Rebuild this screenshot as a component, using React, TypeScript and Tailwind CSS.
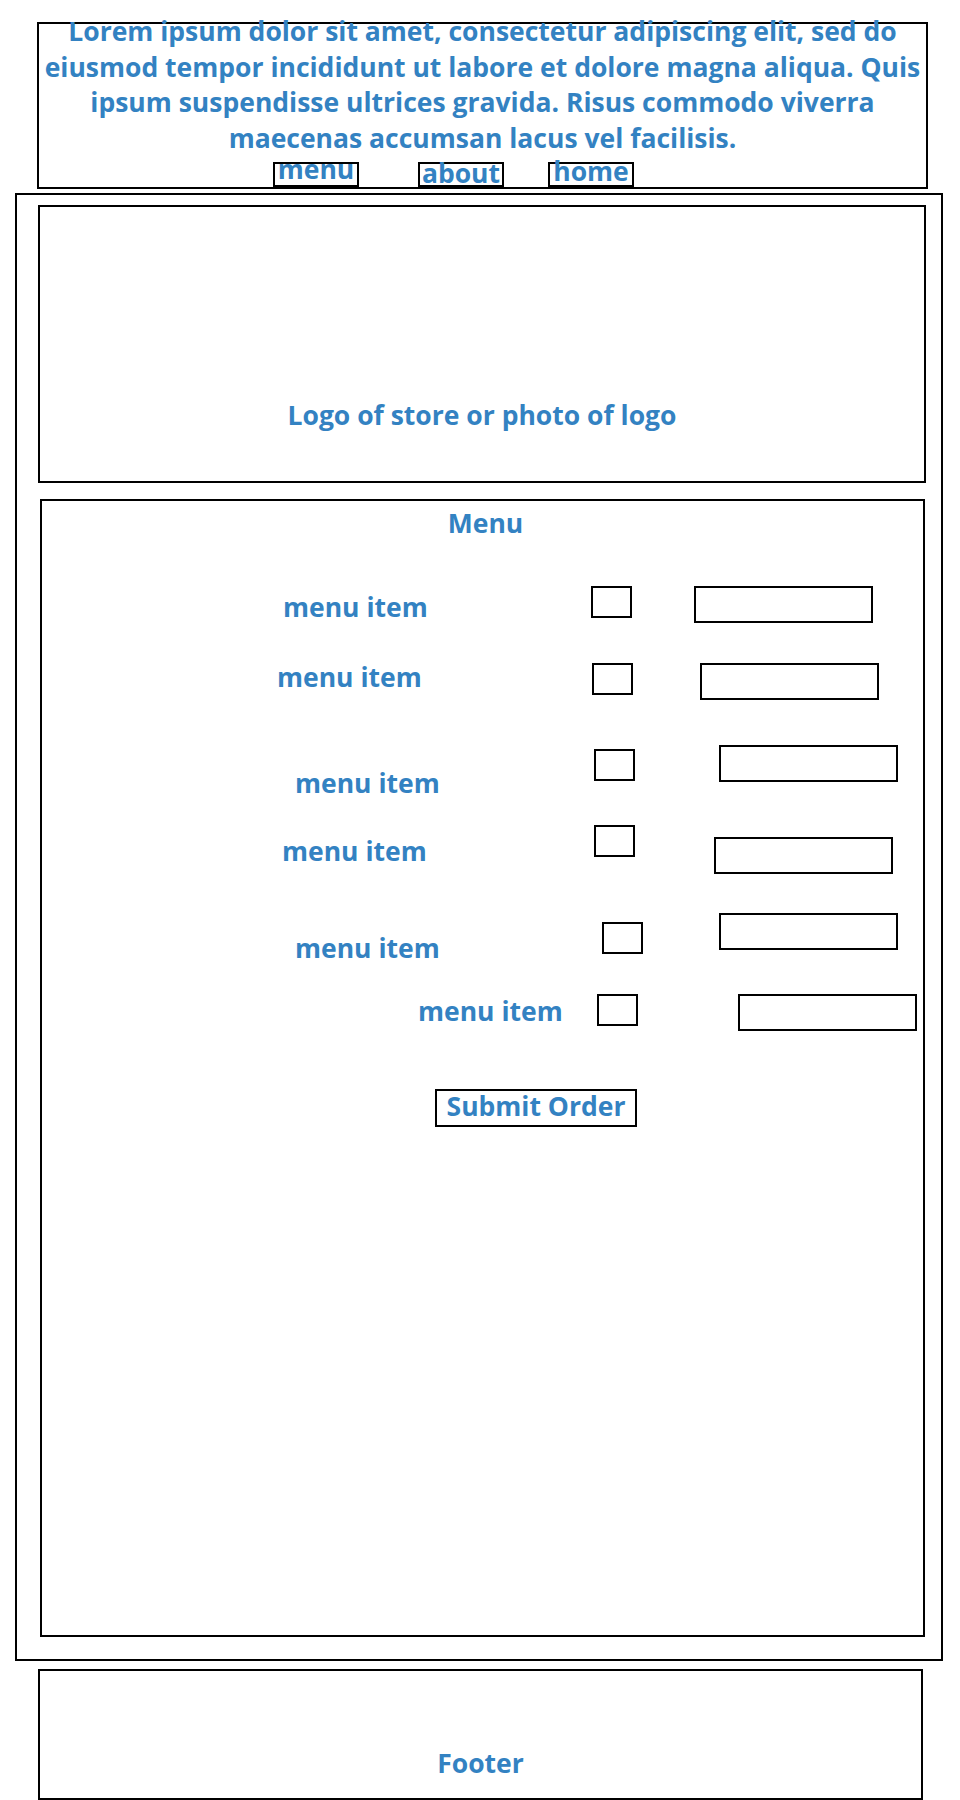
import React from "react";

const rows = [
  { mt: "mt-[45px]", textMl: "ml-[241px]", textMt: "mt-[3px]", textW: "w-[200px]", cbMl: "ml-[108px]", cbMt: "mt-0", tbMl: "ml-[62px]", tbMt: "mt-0" },
  { mt: "mt-[34px]", textMl: "ml-[235px]", textMt: "mt-0", textW: "w-[200px]", cbMl: "ml-[115px]", cbMt: "mt-[4px]", tbMl: "ml-[67px]", tbMt: "mt-[4px]" },
  { mt: "mt-[45px]", textMl: "ml-[253px]", textMt: "mt-[20px]", textW: "w-[200px]", cbMl: "ml-[99px]", cbMt: "mt-[4px]", tbMl: "ml-[84px]", tbMt: "mt-0" },
  { mt: "mt-[24px]", textMl: "ml-[240px]", textMt: "mt-[8px]", textW: "w-[200px]", cbMl: "ml-[112px]", cbMt: "mt-0", tbMl: "ml-[79px]", tbMt: "mt-[12px]" },
  { mt: "mt-[39px]", textMl: "ml-[253px]", textMt: "mt-[17px]", textW: "w-[200px]", cbMl: "ml-[107px]", cbMt: "mt-[9px]", tbMl: "ml-[76px]", tbMt: "mt-0" },
  { mt: "mt-[27px]", textMl: "ml-[376px]", textMt: "mt-0", textW: "w-[160px]", cbMl: "ml-[19px]", cbMt: "mt-[1px]", tbMl: "ml-[100px]", tbMt: "mt-[1px]" },
];

export default function App() {
  return (
    <div
      className="w-[960px] h-[1800px] bg-white overflow-hidden flex flex-col font-bold text-[#3382c2] text-[26.5px] leading-[36px]"
      style={{ fontFamily: '"Open Sans", "Noto Sans", sans-serif' }}
    >
      {/* Header */}
      <div className="ml-[37px] mt-[22px] w-[891px] h-[167px] shrink-0 border-2 border-black flex flex-col items-center">
        <p className="-mt-[10px] text-center leading-[35.5px] whitespace-nowrap">
          Lorem ipsum dolor sit amet, consectetur adipiscing elit, sed do
          <br />
          eiusmod tempor incididunt ut labore et dolore magna aliqua. Quis
          <br />
          ipsum suspendisse ultrices gravida. Risus commodo viverra
          <br />
          maecenas accumsan lacus vel facilisis.
        </p>
        <nav className="self-stretch mt-[6px] h-[25px] flex">
          <div className="ml-[234px] w-[86px] h-[25px] border-2 border-black flex justify-center">
            <span className="-mt-[5px] leading-[21px]">menu</span>
          </div>
          <div className="ml-[59px] w-[86px] h-[25px] border-2 border-black flex justify-center">
            <span className="-mt-[1px] leading-[21px]">about</span>
          </div>
          <div className="ml-[44px] w-[86px] h-[25px] border-2 border-black flex justify-center">
            <span className="-mt-[3px] leading-[21px]">home</span>
          </div>
        </nav>
      </div>

      {/* Main */}
      <div className="ml-[15px] mt-[4px] w-[928px] h-[1468px] shrink-0 border-2 border-black flex flex-col">
        <div className="ml-[21px] mt-[10px] w-[888px] h-[278px] shrink-0 border-2 border-black flex flex-col justify-end items-center pb-[48px]">
          <span className="whitespace-nowrap">Logo of store or photo of logo</span>
        </div>

        <div className="ml-[23px] mt-[16px] w-[885px] h-[1138px] shrink-0 border-2 border-black flex flex-col">
          <div className="mt-[4px] pl-[6px] text-center">Menu</div>

          {rows.map((r, i) => (
            <div key={i} className={`flex items-start ${r.mt}`}>
              <div className={`${r.textMl} ${r.textMt} ${r.textW} whitespace-nowrap`}>menu item</div>
              <div className={`${r.cbMl} ${r.cbMt} w-[41px] h-[32px] border-2 border-black shrink-0`} />
              <div className={`${r.tbMl} ${r.tbMt} w-[179px] h-[37px] border-2 border-black shrink-0`} />
            </div>
          ))}

          <div className="mt-[58px] ml-[393px] w-[202px] h-[38px] border-2 border-black flex justify-center">
            <span className="-mt-[2px] leading-[34px] whitespace-nowrap">Submit Order</span>
          </div>
        </div>
      </div>

      {/* Footer */}
      <div className="ml-[38px] mt-[8px] w-[885px] h-[131px] shrink-0 border-2 border-black flex flex-col justify-end items-center pb-[17px]">
        <span>Footer</span>
      </div>
    </div>
  );
}
